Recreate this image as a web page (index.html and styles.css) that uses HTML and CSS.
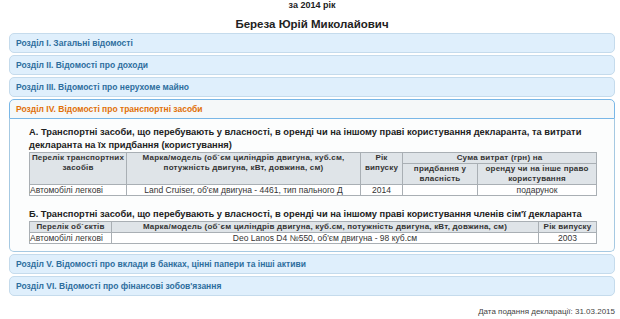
FILE: index.html
```html
<!DOCTYPE html>
<html lang="uk">
<head>
    <meta charset="UTF-8">
    <title>Декларація</title>
    <link rel="stylesheet" href="styles.css">
</head>
<body>
    <div class="page">
        <div class="year">за 2014 рік</div>
        <h1 class="name">Береза Юрій Миколайович</h1>

        <div class="accordion">
            <h3 class="acc-header">Розділ I. Загальні відомості</h3>
            <h3 class="acc-header">Розділ II. Відомості про доходи</h3>
            <h3 class="acc-header">Розділ III. Відомості про нерухоме майно</h3>
            <h3 class="acc-header active">Розділ IV. Відомості про транспортні засоби</h3>
            <div class="acc-content">
                <h4 class="sub-title">А. Транспортні засоби, що перебувають у власності, в оренді чи на іншому праві користування декларанта, та витрати декларанта на їх придбання (користування)</h4>
                <table class="decl-table">
                    <tr>
                        <th rowspan="2" class="c-type">Перелік транспортних засобів</th>
                        <th rowspan="2" class="c-model">Марка/модель (об`єм циліндрів двигуна, куб.см, потужність двигуна, кВт, довжина, см)</th>
                        <th rowspan="2" class="c-year">Рік випуску</th>
                        <th colspan="2">Сума витрат (грн) на</th>
                    </tr>
                    <tr>
                        <th class="c-buy">придбання у власність</th>
                        <th class="c-rent">оренду чи на інше право користування</th>
                    </tr>
                    <tr>
                        <td class="left">Автомобілі легкові</td>
                        <td>Land Cruiser, об'єм двигуна - 4461, тип пального Д</td>
                        <td>2014</td>
                        <td></td>
                        <td>подарунок</td>
                    </tr>
                </table>

                <h4 class="sub-title second">Б. Транспортні засоби, що перебувають у власності, в оренді чи на іншому праві користування членів сім'ї декларанта</h4>
                <table class="decl-table">
                    <tr>
                        <th class="c-type2">Перелік об`єктів</th>
                        <th>Марка/модель (об`єм циліндрів двигуна, куб.см, потужність двигуна, кВт, довжина, см)</th>
                        <th class="c-year2">Рік випуску</th>
                    </tr>
                    <tr>
                        <td class="left">Автомобілі легкові</td>
                        <td>Deo Lanos D4 №550, об'єм двигуна - 98 куб.см</td>
                        <td>2003</td>
                    </tr>
                </table>
            </div>
            <h3 class="acc-header">Розділ V. Відомості про вклади в банках, цінні папери та інші активи</h3>
            <h3 class="acc-header">Розділ VI. Відомості про фінансові зобов'язання</h3>
        </div>

        <div class="date">Дата подання декларації: 31.03.2015</div>
    </div>
</body>
</html>
```

FILE: styles.css
```css
body {
    font-family: "Liberation Sans", Arial, sans-serif;
    margin: 0;
    padding: 0;
    background: #ffffff;
    color: #222;
}

.page {
    margin: 0 5px 0 9px;
}

.year {
    text-align: center;
    font-size: 9px;
    font-weight: bold;
    line-height: 11px;
    color: #222;
}

.name {
    text-align: center;
    font-size: 11.5px;
    font-weight: bold;
    line-height: 14px;
    margin: 6px 0 0;
    color: #222;
}

.acc-header {
    margin: 2px 0 0;
    padding: 0 6px;
    height: 18px;
    line-height: 18px;
    font-size: 8.5px;
    font-weight: bold;
    color: #2e6e9e;
    background: #dfeffc;
    border: 1px solid #c5dbec;
    border-radius: 5px;
}

.acc-header.active {
    color: #e17009;
    background: #f5f8f9;
    border-color: #79b7e7;
    border-bottom-left-radius: 0;
    border-bottom-right-radius: 0;
}

.acc-content {
    padding: 7px 17px 7px 19px;
    background: #fcfdfd;
    border: 1px solid #a6c9e2;
    border-top: none;
    border-bottom-left-radius: 5px;
    border-bottom-right-radius: 5px;
}

.sub-title {
    margin: 0;
    font-size: 9.3px;
    line-height: 13px;
    font-weight: bold;
    color: #222;
}

.sub-title.second {
    margin-top: 12px;
}

.decl-table {
    width: 100%;
    border-collapse: collapse;
    font-size: 8.5px;
    color: #333;
    background: #fff;
}

.decl-table th,
.decl-table td {
    border: 1px solid #a9afb4;
    padding: 0 2px;
    line-height: 10px;
    text-align: center;
}

.decl-table th {
    background: #dfe4e8;
    vertical-align: top;
    font-weight: bold;
    font-size: 8px;
    letter-spacing: 0.2px;
    padding: 0 1px;
}

.decl-table td.left {
    text-align: left;
    padding-left: 0;
}

.c-type { width: 94px; }
.c-model { width: 231px; }
.c-year { width: 39px; }
.c-buy { width: 72px; }
.c-type2 { width: 79px; }
.c-year2 { width: 55px; }

.date {
    text-align: right;
    font-size: 8px;
    line-height: 10px;
    color: #444;
    margin-top: 11px;
}
```
